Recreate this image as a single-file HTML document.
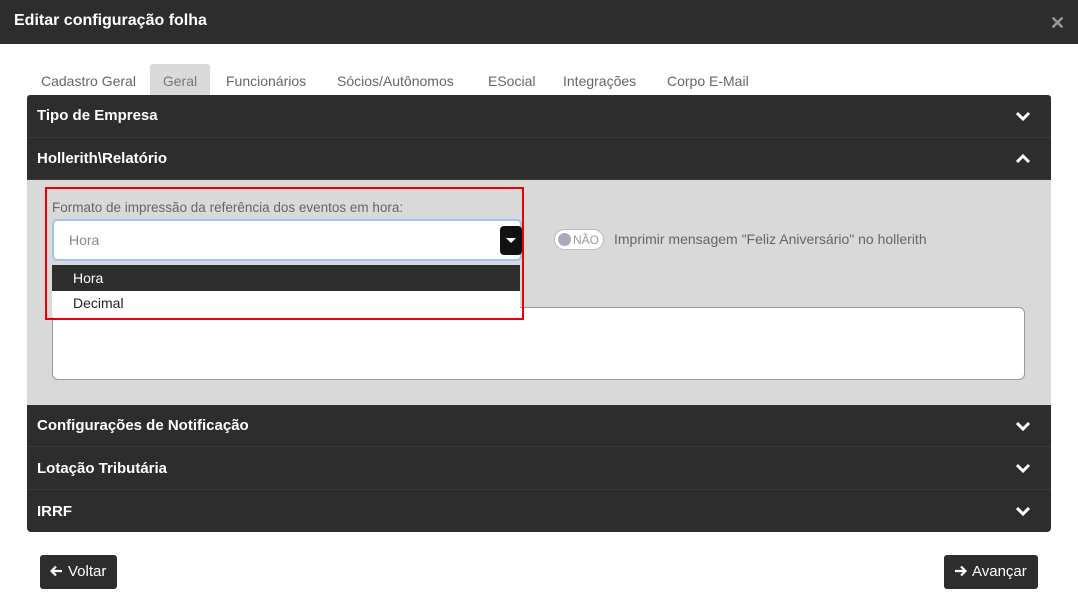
<!DOCTYPE html>
<html><head><meta charset="utf-8"><style>
*{box-sizing:border-box;margin:0;padding:0}
body{width:1078px;height:609px;background:#fff;font-family:"Liberation Sans",sans-serif;position:relative;overflow:hidden}
.abs{position:absolute}
.hdr{left:0;top:0;width:1078px;height:44px;background:#2d2d2d;color:#fff;font-weight:bold;font-size:16px;padding:12px 14px}
.tab{top:64px;height:32px;font-size:14px;color:#666;padding-top:9px}
.row{left:27px;width:1024px;background:#2d2d2d;color:#fff;font-weight:bold;font-size:15px;padding-left:10px;border-bottom:1px solid #3a3a3a}
.chev{position:absolute;right:20px;top:50%;margin-top:-7px}
.btn{top:555px;height:34px;background:#2d2d2d;color:#fff;border-radius:3px;font-size:15px;line-height:34px;padding-left:10px;white-space:nowrap}
.btn svg{vertical-align:-1px;margin-right:5px}
</style></head><body>
<div class="abs hdr">Editar configuração folha</div>
<div class="abs" style="left:1050px;top:13px;color:#999;font-size:18px;font-weight:bold">✕</div>
<div class="abs tab" style="left:41px">Cadastro Geral</div>
<div class="abs tab" style="left:150px;width:60px;background:#d9d9d9;border-radius:3px 3px 0 0;text-align:center;color:#777">Geral</div>
<div class="abs tab" style="left:226px">Funcionários</div>
<div class="abs tab" style="left:337px">Sócios/Autônomos</div>
<div class="abs tab" style="left:488px">ESocial</div>
<div class="abs tab" style="left:563px">Integrações</div>
<div class="abs tab" style="left:667px">Corpo E-Mail</div>

<div class="abs row" style="top:95px;height:43px;padding-top:12px;border-radius:3px 3px 0 0">Tipo de Empresa<svg class="chev" width="16" height="14" viewBox="0 0 16 14"><path d="M2 4l6 6 6-6" stroke="#fff" stroke-width="3" fill="none"/></svg></div>
<div class="abs row" style="top:138px;height:42px;padding-top:12px">Hollerith\Relatório<svg class="chev" width="16" height="14" viewBox="0 0 16 14"><path d="M2 10l6-6 6 6" stroke="#fff" stroke-width="3" fill="none"/></svg></div>
<div class="abs" style="left:27px;top:180px;width:1024px;height:225px;background:#d9d9d9"></div>
<div class="abs" style="left:52px;top:200px;font-size:13.5px;color:#666">Formato de impressão da referência dos eventos em hora:</div>
<div class="abs" style="left:52px;top:219px;width:470px;height:42px;background:#fff;border:2px solid #9ec5ee;border-radius:5px;font-size:14px;color:#888;padding:11px 15px">Hora</div>
<div class="abs" style="left:500px;top:226px;width:22px;height:29px;background:#111;border-radius:4px"><svg width="22" height="29"><path d="M6 12h10l-5 5z" fill="#fff"/></svg></div>
<div class="abs" style="left:52px;top:307px;width:973px;height:73px;background:#fff;border:1px solid #999;border-radius:6px"></div>
<div class="abs" style="left:52px;top:265px;width:468px;height:26px;background:#2d2d2d;color:#fff;font-size:14px;padding:5px 21px">Hora</div>
<div class="abs" style="left:52px;top:291px;width:468px;height:26px;background:#fff;color:#222;font-size:14px;padding:4px 21px">Decimal</div>
<div class="abs" style="left:45px;top:187px;width:479px;height:133px;border:2px solid #e00"></div>
<div class="abs" style="left:554px;top:229px;width:50px;height:21px;background:#fff;border:1px solid #bbb;border-radius:11px"><div class="abs" style="left:3px;top:3px;width:13px;height:13px;border-radius:50%;background:#aab"></div><div class="abs" style="left:18px;top:3px;font-size:12px;color:#999">NÃO</div></div>
<div class="abs" style="left:614px;top:231px;font-size:14px;color:#666">Imprimir mensagem "Feliz Aniversário" no hollerith</div>

<div class="abs row" style="top:405px;height:42px;padding-top:12px">Configurações de Notificação<svg class="chev" width="16" height="14" viewBox="0 0 16 14"><path d="M2 4l6 6 6-6" stroke="#fff" stroke-width="3" fill="none"/></svg></div>
<div class="abs row" style="top:447px;height:43px;padding-top:13px">Lotação Tributária<svg class="chev" width="16" height="14" viewBox="0 0 16 14"><path d="M2 4l6 6 6-6" stroke="#fff" stroke-width="3" fill="none"/></svg></div>
<div class="abs row" style="top:490px;height:42px;padding-top:13px;border-radius:0 0 4px 4px;border:none">IRRF<svg class="chev" width="16" height="14" viewBox="0 0 16 14"><path d="M2 4l6 6 6-6" stroke="#fff" stroke-width="3" fill="none"/></svg></div>

<div class="abs btn" style="left:40px;width:77px"><svg width="13" height="12" viewBox="0 0 13 12"><path d="M12 6H2M6 1.5L1.5 6 6 10.5" stroke="#fff" stroke-width="2.2" fill="none"/></svg>Voltar</div>
<div class="abs btn" style="left:944px;width:94px"><svg width="13" height="12" viewBox="0 0 13 12"><path d="M1 6h10M7 1.5L11.5 6 7 10.5" stroke="#fff" stroke-width="2.2" fill="none"/></svg>Avançar</div>
</body></html>
